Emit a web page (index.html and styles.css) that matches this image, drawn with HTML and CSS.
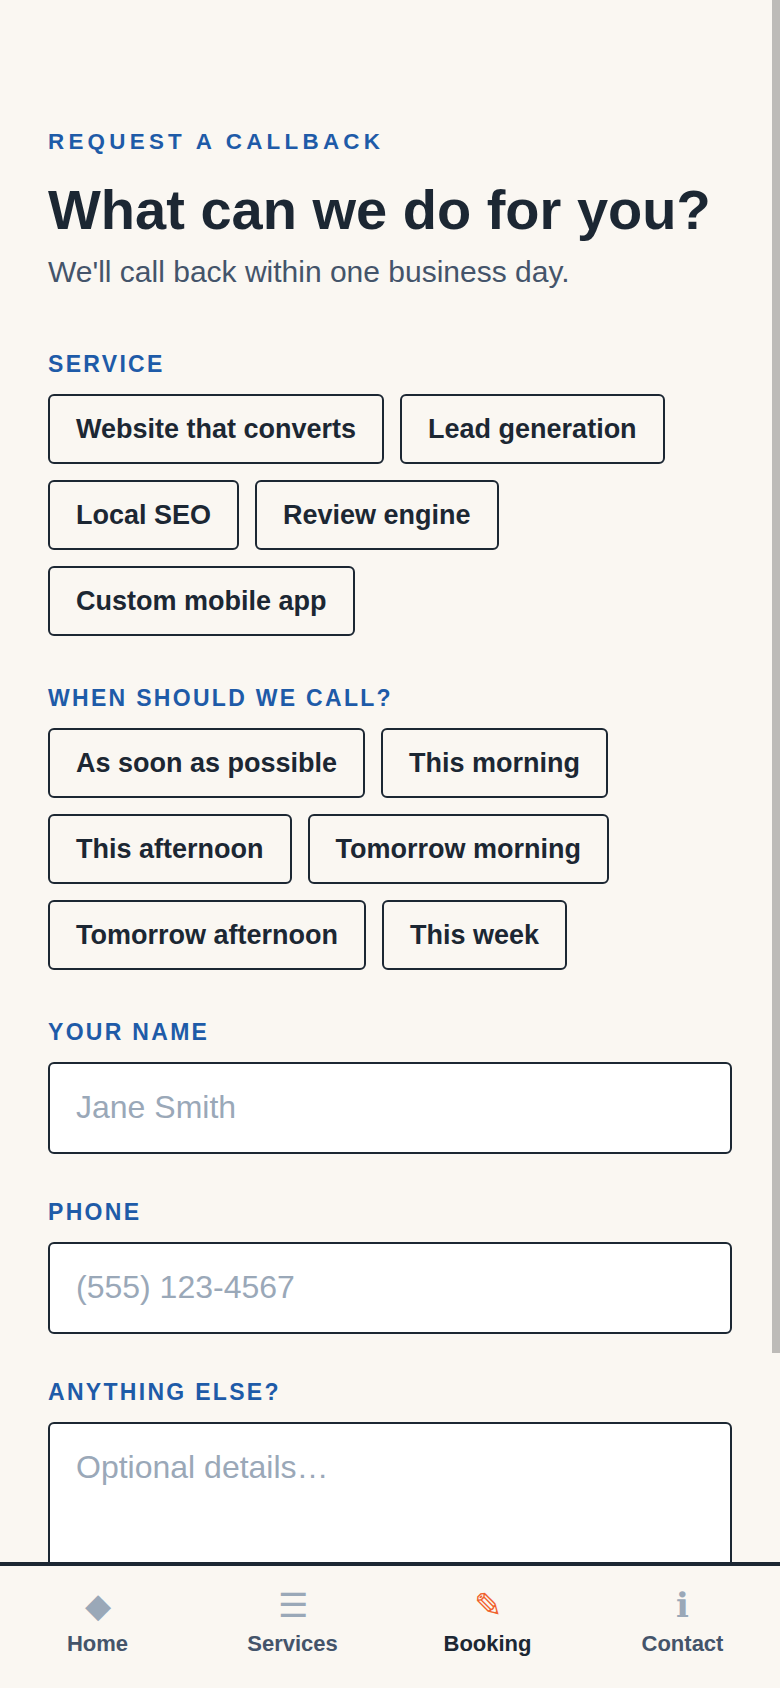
FILE: index.html
```html
<!DOCTYPE html>
<html lang="en">
<head>
<meta charset="utf-8">
<title>Request a callback</title>
<link rel="stylesheet" href="styles.css">
</head>
<body>
<main class="page">
  <p class="eyebrow">REQUEST A CALLBACK</p>
  <h1 class="title">What can we do for you?</h1>
  <p class="subtitle">We'll call back within one business day.</p>
  <section class="field">
    <h2 class="label">SERVICE</h2>
    <div class="chips">
      <button class="chip">Website that converts</button>
      <button class="chip">Lead generation</button>
      <button class="chip">Local SEO</button>
      <button class="chip">Review engine</button>
      <button class="chip">Custom mobile app</button>
    </div>
  </section>
  <section class="field">
    <h2 class="label">WHEN SHOULD WE CALL?</h2>
    <div class="chips">
      <button class="chip">As soon as possible</button>
      <button class="chip">This morning</button>
      <button class="chip">This afternoon</button>
      <button class="chip">Tomorrow morning</button>
      <button class="chip">Tomorrow afternoon</button>
      <button class="chip">This week</button>
    </div>
  </section>
  <section class="field">
    <label class="label" for="name">YOUR NAME</label>
    <input class="input" id="name" type="text" placeholder="Jane Smith">
  </section>
  <section class="field">
    <label class="label" for="phone">PHONE</label>
    <input class="input" id="phone" type="tel" placeholder="(555) 123-4567">
  </section>
  <section class="field">
    <label class="label" for="details">ANYTHING ELSE?</label>
    <textarea class="input area" id="details" placeholder="Optional details…"></textarea>
  </section>
</main>
<div class="thumb"></div>
<nav class="tabs">
  <a class="tab"><span class="icon">◆</span><span>Home</span></a>
  <a class="tab"><span class="icon">☰</span><span>Services</span></a>
  <a class="tab active"><span class="icon">✎</span><span>Booking</span></a>
  <a class="tab"><span class="icon info">ℹ</span><span>Contact</span></a>
</nav>
</body>
</html>
```
FILE: styles.css
```css
* { box-sizing: border-box; }
html, body { margin: 0; height: 100%; overflow: hidden; }
body {
  background: #faf7f2;
  color: #1c2733;
  font-family: "Liberation Sans", Arial, sans-serif;
}
.page { padding: 128px 48px 0; }
.eyebrow {
  margin: 0;
  color: #1e5ba8;
  font-size: 22.4px;
  line-height: 28px;
  font-weight: 700;
  letter-spacing: 0.19em;
}
.title {
  margin: 20px 0 0;
  font-size: 56px;
  line-height: 68px;
  font-weight: 700;
}
.subtitle {
  margin: 7px 0 57px;
  color: #44546a;
  font-size: 30px;
  line-height: 42px;
}
.field { margin-top: 44px; }
.label {
  display: block;
  margin: 0 0 16px;
  color: #1e5ba8;
  font-size: 23px;
  line-height: 28px;
  font-weight: 700;
  letter-spacing: 0.1em;
}
.chips { display: flex; flex-wrap: wrap; gap: 16px; padding-bottom: 4px; }
.chip {
  height: 70px;
  padding: 0 26px;
  border: 2px solid #1c2733;
  border-radius: 6px;
  background: transparent;
  color: #1c2733;
  font: 700 27px "Liberation Sans", Arial, sans-serif;
}
.input {
  display: block;
  width: 100%;
  height: 92px;
  padding: 0 26px 2px;
  border: 2px solid #1c2733;
  border-radius: 6px;
  background: #fff;
  color: #1c2733;
  font: 400 32px "Liberation Sans", Arial, sans-serif;
}
.input::placeholder { color: #9aa8b8; opacity: 1; }
.area { height: 184px; padding-top: 25px; resize: none; }
.thumb {
  position: fixed;
  top: 0;
  right: 0;
  width: 8px;
  height: 1353px;
  background: #bdbbb8;
}
.tabs {
  position: fixed;
  left: 0;
  right: 0;
  bottom: 0;
  display: grid;
  grid-template-columns: repeat(4, 1fr);
  height: 126px;
  padding-top: 22px;
  border-top: 4px solid #1c2733;
  background: #faf7f2;
}
.tab {
  display: flex;
  flex-direction: column;
  align-items: center;
  color: #44546a;
  font-size: 22px;
  line-height: 28px;
  font-weight: 700;
}
.tab .icon {
  height: 42px;
  color: #9aa8b8;
  font-size: 34px;
  line-height: 34px;
  font-weight: 400;
}
.tab .info { font-family: "DejaVu Sans", sans-serif; }
.tab.active { color: #1c2733; }
.tab.active .icon { color: #f0622d; }
```
